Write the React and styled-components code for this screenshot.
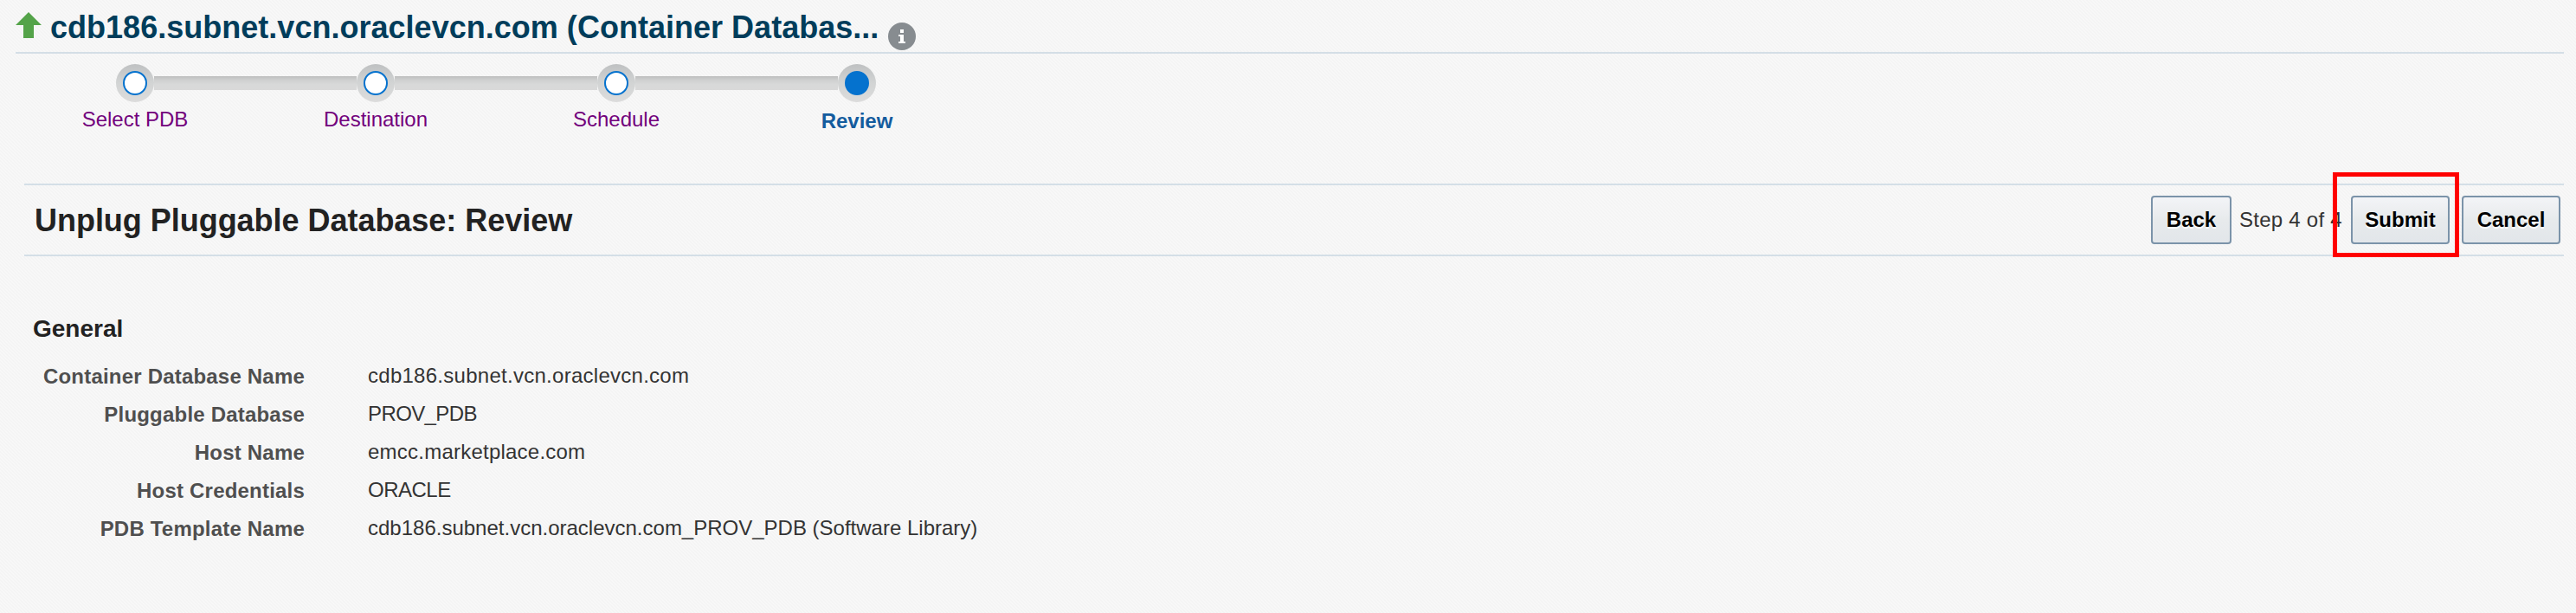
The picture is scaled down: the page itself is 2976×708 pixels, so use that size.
import React from "react";
import styled, { createGlobalStyle } from "styled-components";

const GlobalStyle = createGlobalStyle`
  *, *::before, *::after { box-sizing: border-box; }
  body {
    margin: 0;
    font-family: "Liberation Sans", Arial, sans-serif;
    font-size: 24px;
    color: #333;
    background: #f6f6f6;
  }
`;

const Page = styled.div`
  height: 708px;
  overflow: hidden;
  background: repeating-linear-gradient(45deg, #f8f8f8 0 1.414px, #f4f4f4 1.414px 2.828px);
`;

const TitleBar = styled.header`
  display: flex;
  align-items: flex-start;
  height: 62px;
  margin: 0 14px 0 18px;
  border-bottom: 2px solid #d4dee6;
`;

const UpArrow = styled.svg`
  flex: none;
  width: 30px;
  height: 30px;
  margin-top: 14px;
`;

const TargetName = styled.h1`
  width: 958px;
  margin: 11px 0 0 10px;
  font-size: 36px;
  line-height: 42px;
  font-weight: 700;
  color: #003d5b;
  white-space: nowrap;
  letter-spacing: 0.02px;
`;

const InfoIcon = styled.svg`
  flex: none;
  width: 32px;
  height: 32px;
  margin: 26px 0 0 10px;
`;

const Train = styled.nav`
  display: flex;
  height: 150px;
  padding: 12px 0 0 17px;
`;

const Stop = styled.div`
  display: flex;
  flex-direction: column;
  align-items: center;
  width: 278px;
`;

const Track = styled.div`
  display: flex;
  align-items: center;
  align-self: stretch;
  height: 44px;
`;

const Rail = styled.span`
  flex: 1;
  height: 16px;
  background: ${(p) => (p.$hidden ? "none" : "linear-gradient(#bdbebe, #d0d1d1 30%, #d8d9d9 60%, #d9d9d9)")};
`;

const Ring = styled.span`
  display: flex;
  align-items: center;
  justify-content: center;
  width: 44px;
  height: 44px;
  border-radius: 50%;
  background: linear-gradient(#bfc1c2, #d2d4d4 50%, #dcdcdc);
`;

const Dot = styled.span`
  width: 28px;
  height: 28px;
  border: 2px solid #0572ce;
  border-radius: 50%;
  background: ${(p) => (p.$current ? "#0572ce" : "#fff")};
`;

const StopLabel = styled.span`
  margin-top: ${(p) => (p.$current ? 8 : 6)}px;
  line-height: 28px;
  font-weight: ${(p) => (p.$current ? 700 : 400)};
  color: ${(p) => (p.$current ? "#145c9e" : "#72007c")};
  white-space: nowrap;
`;

const StepHeader = styled.section`
  display: flex;
  align-items: center;
  justify-content: space-between;
  height: 84px;
  margin: 0 14px 0 28px;
  padding: 0 4px 0 12px;
  border: solid #d4dfe7;
  border-width: 2px 0;
`;

const StepTitle = styled.h2`
  margin: 2px 0 0;
  font-size: 36px;
  line-height: 42px;
  color: #222;
  white-space: nowrap;
  letter-spacing: -0.03px;
`;

const Actions = styled.div`
  display: flex;
  align-items: center;
`;

const Button = styled.button`
  width: ${(p) => p.$width}px;
  height: 56px;
  padding: 0;
  border: 2px solid #7b93a9;
  border-radius: 4px;
  background: linear-gradient(#f3f4f7, #e7eaec 50%, #e2e6ea);
  font: 700 24px "Liberation Sans", Arial, sans-serif;
  color: #000;
  text-shadow: 0 2px 0 #fff;
`;

const StepCount = styled.span`
  width: 138px;
  padding-left: 9px;
  white-space: nowrap;
  letter-spacing: 0.25px;
`;

const Highlight = styled.div`
  position: relative;
  display: flex;
  margin-right: 14px;

  &::after {
    content: "";
    position: absolute;
    inset: -27px -11px -15px -21px;
    border: 5px solid #ff0000;
    pointer-events: none;
  }
`;

const General = styled.section`
  padding: 66px 0 0 38px;
`;

const SectionTitle = styled.h3`
  margin: 0 0 14px;
  font-size: 28px;
  line-height: 36px;
  color: #222;
`;

const Fields = styled.dl`
  display: grid;
  grid-template-columns: 314px 1fr;
  column-gap: 73px;
  grid-auto-rows: 44px;
  margin: 0;
`;

const FieldName = styled.dt`
  padding-top: 1px;
  line-height: 44px;
  font-weight: 700;
  color: #4f4f4f;
  text-align: right;
  white-space: nowrap;
  letter-spacing: 0.2px;
`;

const FieldValue = styled.dd`
  margin: 0;
  line-height: 44px;
  white-space: nowrap;
  letter-spacing: ${(p) => p.$track}px;
`;

const stops = [
  { label: "Select PDB" },
  { label: "Destination" },
  { label: "Schedule" },
  { label: "Review", current: true },
];

const fields = [
  { name: "Container Database Name", value: "cdb186.subnet.vcn.oraclevcn.com", track: 0.27 },
  { name: "Pluggable Database", value: "PROV_PDB", track: -0.6 },
  { name: "Host Name", value: "emcc.marketplace.com", track: 0.23 },
  { name: "Host Credentials", value: "ORACLE", track: -0.5 },
  { name: "PDB Template Name", value: "cdb186.subnet.vcn.oraclevcn.com_PROV_PDB (Software Library)", track: 0 },
];

export default function App() {
  return (
    <Page>
      <GlobalStyle />
      <TitleBar>
        <UpArrow viewBox="0 0 30 30" aria-label="Up">
          <path d="M15 0 30 15H21V30H9V15H0Z" fill="#54a349" />
        </UpArrow>
        <TargetName>cdb186.subnet.vcn.oraclevcn.com (Container Databas...</TargetName>
        <InfoIcon viewBox="0 0 32 32" aria-label="Information">
          <circle cx="16" cy="16" r="16" fill="#878c90" />
          <path d="M14 8h4v4h-4zM12 14h6v8h2v2h-8v-2h2v-6h-2z" fill="#fff" />
        </InfoIcon>
      </TitleBar>
      <Train>
        {stops.map((s, i) => (
          <Stop key={s.label}>
            <Track>
              <Rail $hidden={i === 0} />
              <Ring><Dot $current={s.current} /></Ring>
              <Rail $hidden={i === stops.length - 1} />
            </Track>
            <StopLabel $current={s.current}>{s.label}</StopLabel>
          </Stop>
        ))}
      </Train>
      <StepHeader>
        <StepTitle>Unplug Pluggable Database: Review</StepTitle>
        <Actions>
          <Button $width={93}>Back</Button>
          <StepCount>Step 4 of 4</StepCount>
          <Highlight><Button $width={114}>Submit</Button></Highlight>
          <Button $width={114}>Cancel</Button>
        </Actions>
      </StepHeader>
      <General>
        <SectionTitle>General</SectionTitle>
        <Fields>
          {fields.map((f) => (
            <React.Fragment key={f.name}>
              <FieldName>{f.name}</FieldName>
              <FieldValue $track={f.track}>{f.value}</FieldValue>
            </React.Fragment>
          ))}
        </Fields>
      </General>
    </Page>
  );
}
